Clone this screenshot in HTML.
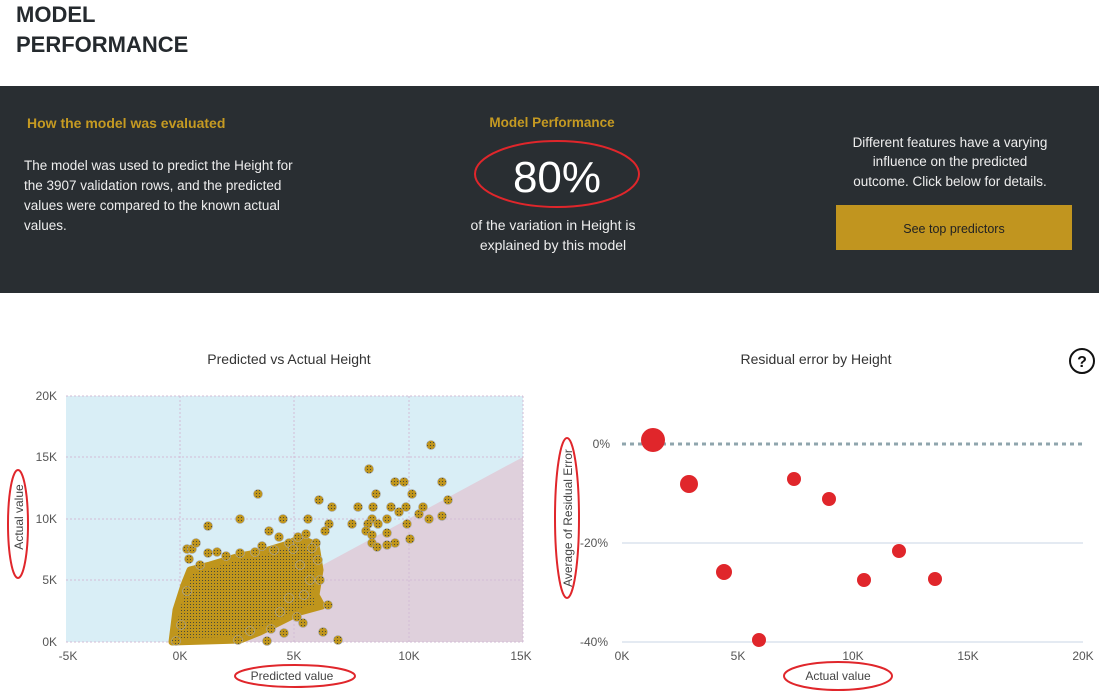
<!DOCTYPE html>
<html><head><meta charset="utf-8"><style>
html,body{margin:0;padding:0;background:#fff;width:1099px;height:697px;overflow:hidden}
svg{display:block;font-family:"Liberation Sans",sans-serif}
</style></head><body>
<svg width="1099" height="697" viewBox="0 0 1099 697" xmlns="http://www.w3.org/2000/svg">
<defs>
<pattern id="dp" width="3" height="3" patternUnits="userSpaceOnUse"><rect width="3" height="3" fill="#bf951c"/><rect x="1" y="1" width="1" height="1" fill="#4a4a3a"/></pattern>
</defs>
<text x="16" y="22" font-size="22" font-weight="bold" fill="#252a2e">MODEL</text>
<text x="16" y="52" font-size="22" font-weight="bold" fill="#252a2e">PERFORMANCE</text>
<rect x="0" y="86" width="1099" height="207" fill="#292e32"/>
<text x="27" y="128" font-size="14" font-weight="bold" fill="#c59a22">How the model was evaluated</text>
<g font-size="13.5" fill="#eee">
<text x="24" y="170">The model was used to predict the Height for</text>
<text x="24" y="190">the 3907 validation rows, and the predicted</text>
<text x="24" y="210">values were compared to the known actual</text>
<text x="24" y="230">values.</text>
</g>
<text x="552" y="127" font-size="13.5" font-weight="bold" fill="#c59a22" text-anchor="middle">Model Performance</text>
<text x="557" y="192" font-size="44" fill="#fff" text-anchor="middle">80%</text>
<ellipse cx="557" cy="174" rx="82" ry="33" fill="none" stroke="#e0262b" stroke-width="2"/>
<g font-size="14" fill="#eee" text-anchor="middle">
<text x="553" y="230">of the variation in Height is</text>
<text x="553" y="250">explained by this model</text>
</g>
<g font-size="13.5" fill="#eee" text-anchor="middle">
<text x="950" y="147">Different features have a varying</text>
<text x="950" y="166">influence on the predicted</text>
<text x="950" y="186">outcome. Click below for details.</text>
</g>
<rect x="836" y="205" width="236" height="45" fill="#c1951f"/>
<text x="954" y="233" font-size="12.5" fill="#222" text-anchor="middle">See top predictors</text>

<text x="289" y="364" font-size="14" fill="#333" text-anchor="middle">Predicted vs Actual Height</text>
<text x="816" y="364" font-size="14" fill="#333" text-anchor="middle">Residual error by Height</text>
<circle cx="1082" cy="361" r="12" fill="none" stroke="#111" stroke-width="2"/>
<text x="1082" y="367" font-size="16" font-weight="bold" fill="#111" text-anchor="middle">?</text>

<rect x="66" y="396" width="457" height="246" fill="#d9eef6"/>
<polygon points="180,642 523,457 523,642" fill="#dfd0dc"/>
<g stroke="#d3bcd6" stroke-width="1" stroke-dasharray="2,2">
<line x1="66" y1="396" x2="523" y2="396"/><line x1="66" y1="457" x2="523" y2="457"/><line x1="66" y1="519" x2="523" y2="519"/><line x1="66" y1="580" x2="523" y2="580"/><line x1="66" y1="642" x2="523" y2="642"/>
<line x1="180" y1="396" x2="180" y2="642"/><line x1="294" y1="396" x2="294" y2="642"/><line x1="409" y1="396" x2="409" y2="642"/><line x1="523" y1="396" x2="523" y2="642"/>
</g>
<g font-size="12" fill="#555" text-anchor="end">
<text x="57" y="400">20K</text><text x="57" y="461">15K</text><text x="57" y="523">10K</text><text x="57" y="584">5K</text><text x="57" y="646">0K</text>
</g>
<g font-size="12" fill="#555" text-anchor="middle">
<text x="68" y="660">-5K</text><text x="180" y="660">0K</text><text x="294" y="660">5K</text><text x="409" y="660">10K</text><text x="521" y="660">15K</text>
</g>
<text x="292" y="680" font-size="12" fill="#444" text-anchor="middle">Predicted value</text>
<ellipse cx="295" cy="676" rx="60" ry="11" fill="none" stroke="#e0262b" stroke-width="2"/>
<text transform="translate(23,517) rotate(-90)" font-size="12" fill="#444" text-anchor="middle">Actual value</text>
<ellipse cx="18" cy="524" rx="10" ry="54" fill="none" stroke="#e0262b" stroke-width="2"/>

<polygon points="172,642 176,610 184,585 190,570 210,565 240,556 262,552 285,545 300,538 316,545 320,570 316,595 322,606 300,612 280,622 260,632 240,640" fill="url(#dp)" stroke="#bf951c" stroke-width="7" stroke-linejoin="round"/>
<g fill="url(#dp)" stroke="#a8a8a8" stroke-width="0.6">
<circle cx="431" cy="445" r="4.5"/><circle cx="369" cy="469" r="4.5"/><circle cx="395" cy="482" r="4.5"/><circle cx="404" cy="482" r="4.5"/><circle cx="442" cy="482" r="4.5"/>
<circle cx="376" cy="494" r="4.5"/><circle cx="412" cy="494" r="4.5"/><circle cx="258" cy="494" r="4.5"/><circle cx="319" cy="500" r="4.5"/>
<circle cx="332" cy="507" r="4.5"/><circle cx="358" cy="507" r="4.5"/><circle cx="373" cy="507" r="4.5"/><circle cx="391" cy="507" r="4.5"/><circle cx="406" cy="507" r="4.5"/>
<circle cx="448" cy="500" r="4.5"/><circle cx="419" cy="514" r="4.5"/><circle cx="423" cy="507" r="4.5"/><circle cx="240" cy="519" r="4.5"/><circle cx="283" cy="519" r="4.5"/><circle cx="308" cy="519" r="4.5"/>
<circle cx="372" cy="519" r="4.5"/><circle cx="387" cy="519" r="4.5"/><circle cx="429" cy="519" r="4.5"/><circle cx="442" cy="516" r="4.5"/><circle cx="399" cy="512" r="4.5"/>
<circle cx="208" cy="526" r="4.5"/><circle cx="329" cy="524" r="4.5"/><circle cx="352" cy="524" r="4.5"/><circle cx="368" cy="524" r="4.5"/><circle cx="378" cy="524" r="4.5"/><circle cx="407" cy="524" r="4.5"/>
<circle cx="269" cy="531" r="4.5"/><circle cx="325" cy="531" r="4.5"/><circle cx="366" cy="531" r="4.5"/><circle cx="279" cy="537" r="4.5"/><circle cx="298" cy="537" r="4.5"/>
<circle cx="372" cy="535" r="4.5"/><circle cx="387" cy="533" r="4.5"/><circle cx="410" cy="539" r="4.5"/><circle cx="372" cy="543" r="4.5"/><circle cx="377" cy="547" r="4.5"/><circle cx="395" cy="543" r="4.5"/><circle cx="387" cy="545" r="4.5"/>
<circle cx="289" cy="543" r="4.5"/><circle cx="316" cy="543" r="4.5"/><circle cx="187" cy="549" r="4.5"/><circle cx="192" cy="549" r="4.5"/><circle cx="196" cy="543" r="4.5"/><circle cx="189" cy="559" r="4.5"/>
<circle cx="328" cy="605" r="4.5"/><circle cx="297" cy="617" r="4.5"/><circle cx="303" cy="623" r="4.5"/><circle cx="271" cy="629" r="4.5"/><circle cx="284" cy="633" r="4.5"/><circle cx="323" cy="632" r="4.5"/><circle cx="338" cy="640" r="4.5"/><circle cx="267" cy="641" r="4.5"/><circle cx="238" cy="640" r="4.5"/>
<circle cx="310" cy="580" r="4.5"/><circle cx="320" cy="580" r="4.5"/><circle cx="187" cy="591" r="4.5"/><circle cx="208" cy="553" r="4.5"/><circle cx="217" cy="552" r="4.5"/><circle cx="226" cy="556" r="4.5"/>
<circle cx="312" cy="548" r="4.5"/><circle cx="306" cy="534" r="4.5"/><circle cx="293" cy="549" r="4.5"/><circle cx="240" cy="553" r="4.5"/><circle cx="255" cy="552" r="4.5"/><circle cx="262" cy="546" r="4.5"/><circle cx="274" cy="550" r="4.5"/>
<circle cx="304" cy="595" r="4.5"/><circle cx="300" cy="565" r="4.5"/><circle cx="289" cy="598" r="4.5"/><circle cx="280" cy="612" r="4.5"/><circle cx="250" cy="631" r="4.5"/>
<circle cx="176" cy="641" r="4.5"/><circle cx="181" cy="625" r="4.5"/><circle cx="200" cy="565" r="4.5"/><circle cx="318" cy="560" r="4.5"/>
</g>

<g stroke="#c9d6e6" stroke-width="1">
<line x1="622" y1="543" x2="1083" y2="543"/><line x1="622" y1="642" x2="1083" y2="642"/>
</g>
<line x1="622" y1="444" x2="1083" y2="444" stroke="#8fa5ad" stroke-width="3" stroke-dasharray="4,4"/>
<g font-size="12" fill="#555" text-anchor="end">
<text x="610" y="448">0%</text><text x="608" y="547">-20%</text><text x="608" y="646">-40%</text>
</g>
<g font-size="12" fill="#555" text-anchor="middle">
<text x="622" y="660">0K</text><text x="738" y="660">5K</text><text x="853" y="660">10K</text><text x="968" y="660">15K</text><text x="1083" y="660">20K</text>
</g>
<text x="838" y="680" font-size="12" fill="#444" text-anchor="middle">Actual value</text>
<ellipse cx="838" cy="676" rx="54" ry="14" fill="none" stroke="#e0262b" stroke-width="2"/>
<text transform="translate(572,518) rotate(-90)" font-size="12" fill="#444" text-anchor="middle">Average of Residual Error</text>
<ellipse cx="567" cy="518" rx="12" ry="80" fill="none" stroke="#e0262b" stroke-width="2"/>
<g fill="#e0262b">
<circle cx="653" cy="440" r="12"/><circle cx="689" cy="484" r="9"/><circle cx="794" cy="479" r="7"/><circle cx="829" cy="499" r="7"/><circle cx="724" cy="572" r="8"/><circle cx="899" cy="551" r="7"/><circle cx="864" cy="580" r="7"/><circle cx="935" cy="579" r="7"/><circle cx="759" cy="640" r="7"/>
</g>
</svg>
</body></html>
